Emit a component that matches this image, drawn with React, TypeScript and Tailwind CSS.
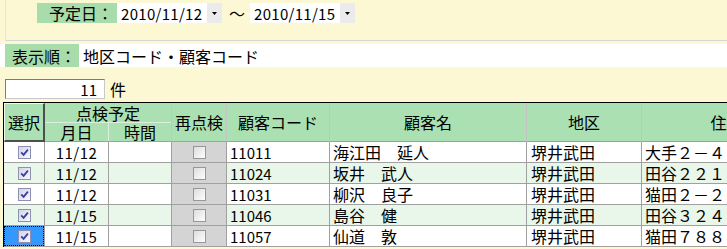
import React from "react";

type Row = { date: string; code: string; name: string; area: string; addr: string };

const rows: Row[] = [
  { date: "11/12", code: "11011", name: "海江田　延人", area: "堺井武田", addr: "大手２－４" },
  { date: "11/12", code: "11024", name: "坂井　武人", area: "堺井武田", addr: "田谷２２１" },
  { date: "11/12", code: "11031", name: "柳沢　良子", area: "堺井武田", addr: "猫田２－２" },
  { date: "11/15", code: "11046", name: "島谷　健", area: "堺井武田", addr: "田谷３２４" },
  { date: "11/15", code: "11057", name: "仙道　敦", area: "堺井武田", addr: "猫田７８８" },
];

function Check({ checked }: { checked: boolean }) {
  return (
    <span
      className={`flex h-[13px] w-[13px] items-center justify-center border ${
        checked
          ? "border-[#8e90b2] bg-linear-to-br from-[#d3d5e6] to-[#f8f8fd]"
          : "border-[#979797] bg-linear-to-br from-[#dedede] to-[#fdfdfd]"
      }`}
    >
      {checked && (
        <svg width="9" height="9" viewBox="0 0 9 9">
          <path d="M1.2 4.3 L3.6 6.8 L7.9 1.6" fill="none" stroke="#3b3f9e" strokeWidth="1.8" />
        </svg>
      )}
    </span>
  );
}

function DateBox({ value }: { value: string }) {
  return (
    <div className="flex h-full">
      <div className="flex w-[90px] items-center bg-white pl-[4px] text-[15px] tracking-[0.3px]">{value}</div>
      <div className="flex w-[15px] items-center justify-center bg-[#ebebeb]">
        <svg width="5" height="3" viewBox="0 0 5 3">
          <polygon points="0,0 5,0 2.5,3" fill="#000" />
        </svg>
      </div>
    </div>
  );
}

export default function App() {
  return (
    <div className="h-[249px] w-[727px] overflow-hidden bg-[#fbf8d3] font-['Noto_Sans_CJK_JP',sans-serif] text-[16px] leading-none text-black">
      {/* 予定日 */}
      <div className="ml-[5px] h-[41px] border-b border-l border-b-[#d4d4d4] border-l-[#ebe7c3] pl-[31px] pt-[3px]">
        <div className="flex h-[20px] items-center">
          <div className="flex h-full w-[80px] items-center justify-end bg-[#a8dcab] pr-[4px]">予定日：</div>
          <DateBox value="2010/11/12" />
          <span className="mx-[7px] w-[14px]">～</span>
          <DateBox value="2010/11/15" />
        </div>
      </div>

      {/* 表示順 */}
      <div className="mt-[3px] flex h-[23px] items-center bg-white">
        <div className="ml-[5px] flex h-full w-[74px] items-center bg-[#a8dcab] pl-[7px]">表示順：</div>
        <span className="ml-[4px]">地区コード・顧客コード</span>
      </div>

      {/* 件数 */}
      <div className="ml-[5px] mt-[12px] flex h-[20px] items-center">
        <div className="flex h-full w-[100px] items-center justify-end border border-[#7c7c7c] border-b-[#c8c8c8] border-r-[#c8c8c8] bg-white pr-[7px] text-[15px]">
          11
        </div>
        <span className="ml-[5px]">件</span>
      </div>

      {/* 一覧 */}
      <div className="ml-[3px] mt-[3px] w-max border-l border-t border-black">
        <div className="flex h-[39px] bg-[#abe0b2]">
          <div className="flex h-full w-[41px] items-center justify-center border-b-2 border-l border-r-2 border-t border-b-[#4e4e4e] border-l-[#eef8ee] border-r-[#4e4e4e] border-t-[#eef8ee]">
            選択
          </div>
          <div className="flex h-full w-[127px] flex-col border-b border-r border-b-[#a0a0a0] border-r-[#c4c4c4]">
            <div className="flex h-[20px] items-center justify-center border-b border-[#d9f0dc]">点検予定</div>
            <div className="flex flex-1">
              <div className="flex w-[64px] items-center justify-center border-r border-[#d9f0dc]">月日</div>
              <div className="flex flex-1 items-center justify-center">時間</div>
            </div>
          </div>
          <div className="flex h-full w-[55px] items-center justify-center border-b border-r border-b-[#a0a0a0] border-r-[#c4c4c4]">再点検</div>
          <div className="flex h-full w-[103px] items-center justify-center border-b border-r border-b-[#a0a0a0] border-r-[#c4c4c4]">顧客コード</div>
          <div className="flex h-full w-[197px] items-center justify-center border-b border-r border-b-[#a0a0a0] border-r-[#c4c4c4]">顧客名</div>
          <div className="flex h-full w-[115px] items-center justify-center border-b border-r border-b-[#a0a0a0] border-r-[#c4c4c4]">地区</div>
          <div className="flex h-full w-[170px] items-center justify-center border-b border-r border-b-[#a0a0a0] border-r-[#c4c4c4]">住所</div>
        </div>

        {rows.map((r, i) => {
          const bg = i % 2 === 1 ? "bg-[#e8f7e9]" : "bg-white";
          const last = i === rows.length - 1;
          return (
            <div key={r.code} className={`flex h-[21px] ${bg}`}>
              <div className="flex h-full w-[41px] items-center justify-center border-b border-r border-[#a0a0a0]">
                {last ? (
                  <div className="flex h-full w-full items-center justify-center border border-dotted border-black bg-[#3399ff]">
                    <Check checked />
                  </div>
                ) : (
                  <Check checked />
                )}
              </div>
              <div className="flex h-full w-[64px] items-center justify-center border-b border-r border-[#a0a0a0] text-[15px] tracking-[0.5px]">{r.date}</div>
              <div className="h-full w-[63px] border-b border-r border-[#a0a0a0]"></div>
              <div className="flex h-full w-[55px] items-center justify-center border-b border-r border-[#a0a0a0] bg-[#d4d4d4]">
                <Check checked={false} />
              </div>
              <div className="flex h-full w-[103px] items-center border-b border-r border-[#a0a0a0] pl-[3px] text-[15px]">{r.code}</div>
              <div className="flex h-full w-[197px] items-center border-b border-r border-[#a0a0a0] pl-[3px]">{r.name}</div>
              <div className="flex h-full w-[115px] items-center border-b border-r border-[#a0a0a0] pl-[4px]">{r.area}</div>
              <div className="flex h-full w-[170px] items-center border-b border-r border-[#a0a0a0] pl-[3px]">{r.addr}</div>
            </div>
          );
        })}
      </div>
    </div>
  );
}
